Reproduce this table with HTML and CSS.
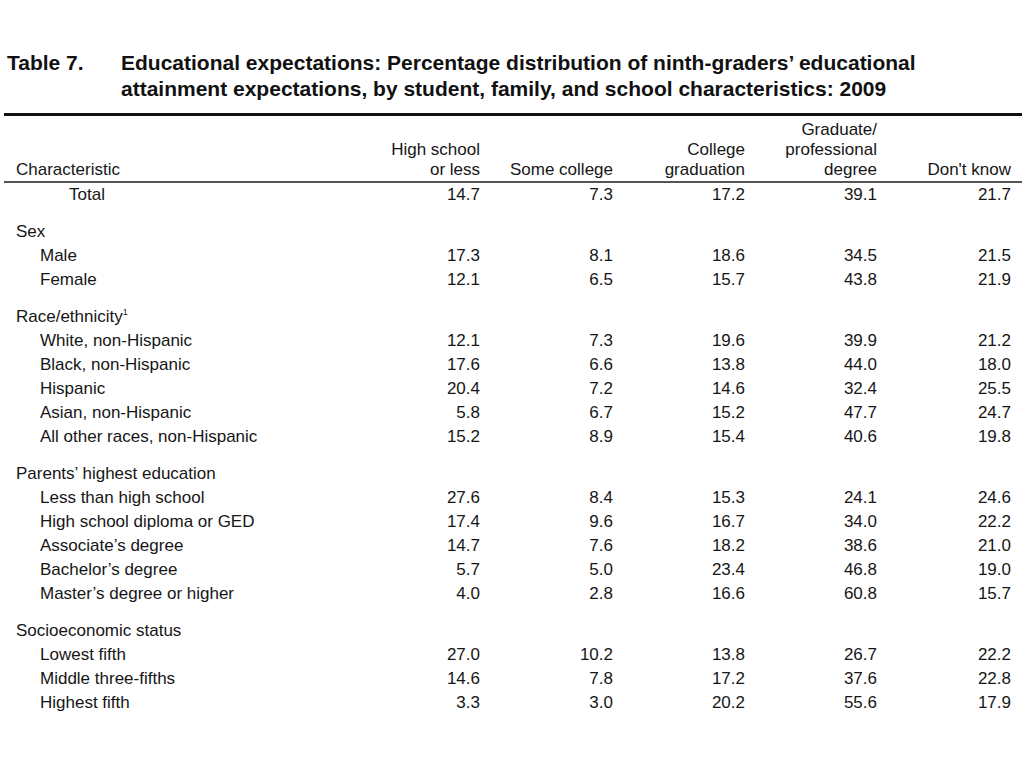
FILE: index.html
```html
<!DOCTYPE html>
<html>
<head>
<meta charset="utf-8">
<link rel="stylesheet" href="styles.css">
</head>
<body>
<div class="page">
  <div class="title">
    <div class="tnum">Table 7.</div>
    <div class="ttext">Educational expectations: Percentage distribution of ninth-graders’ educational attainment expectations, by student, family, and school characteristics: 2009</div>
  </div>
  <table class="data">
    <colgroup>
      <col class="c-label"><col class="c-hs"><col class="c-sc"><col class="c-cg"><col class="c-gd"><col class="c-dk">
    </colgroup>
    <thead>
      <tr>
        <th class="lab">Characteristic</th>
        <th>High school<br>or less</th>
        <th>Some college</th>
        <th>College<br>graduation</th>
        <th>Graduate/<br>professional<br>degree</th>
        <th class="last">Don't know</th>
      </tr>
    </thead>
    <tbody>
      <tr class="total"><td class="lab">Total</td><td>14.7</td><td>7.3</td><td>17.2</td><td>39.1</td><td class="last">21.7</td></tr>

      <tr class="group"><td class="lab">Sex</td><td></td><td></td><td></td><td></td><td class="last"></td></tr>
      <tr class="item"><td class="lab">Male</td><td>17.3</td><td>8.1</td><td>18.6</td><td>34.5</td><td class="last">21.5</td></tr>
      <tr class="item"><td class="lab">Female</td><td>12.1</td><td>6.5</td><td>15.7</td><td>43.8</td><td class="last">21.9</td></tr>

      <tr class="group"><td class="lab">Race/ethnicity<sup>1</sup></td><td></td><td></td><td></td><td></td><td class="last"></td></tr>
      <tr class="item"><td class="lab">White, non-Hispanic</td><td>12.1</td><td>7.3</td><td>19.6</td><td>39.9</td><td class="last">21.2</td></tr>
      <tr class="item"><td class="lab">Black, non-Hispanic</td><td>17.6</td><td>6.6</td><td>13.8</td><td>44.0</td><td class="last">18.0</td></tr>
      <tr class="item"><td class="lab">Hispanic</td><td>20.4</td><td>7.2</td><td>14.6</td><td>32.4</td><td class="last">25.5</td></tr>
      <tr class="item"><td class="lab">Asian, non-Hispanic</td><td>5.8</td><td>6.7</td><td>15.2</td><td>47.7</td><td class="last">24.7</td></tr>
      <tr class="item"><td class="lab">All other races, non-Hispanic</td><td>15.2</td><td>8.9</td><td>15.4</td><td>40.6</td><td class="last">19.8</td></tr>

      <tr class="group"><td class="lab">Parents’ highest education</td><td></td><td></td><td></td><td></td><td class="last"></td></tr>
      <tr class="item"><td class="lab">Less than high school</td><td>27.6</td><td>8.4</td><td>15.3</td><td>24.1</td><td class="last">24.6</td></tr>
      <tr class="item"><td class="lab">High school diploma or GED</td><td>17.4</td><td>9.6</td><td>16.7</td><td>34.0</td><td class="last">22.2</td></tr>
      <tr class="item"><td class="lab">Associate’s degree</td><td>14.7</td><td>7.6</td><td>18.2</td><td>38.6</td><td class="last">21.0</td></tr>
      <tr class="item"><td class="lab">Bachelor’s degree</td><td>5.7</td><td>5.0</td><td>23.4</td><td>46.8</td><td class="last">19.0</td></tr>
      <tr class="item"><td class="lab">Master’s degree or higher</td><td>4.0</td><td>2.8</td><td>16.6</td><td>60.8</td><td class="last">15.7</td></tr>

      <tr class="group"><td class="lab">Socioeconomic status</td><td></td><td></td><td></td><td></td><td class="last"></td></tr>
      <tr class="item"><td class="lab">Lowest fifth</td><td>27.0</td><td>10.2</td><td>13.8</td><td>26.7</td><td class="last">22.2</td></tr>
      <tr class="item"><td class="lab">Middle three-fifths</td><td>14.6</td><td>7.8</td><td>17.2</td><td>37.6</td><td class="last">22.8</td></tr>
      <tr class="item"><td class="lab">Highest fifth</td><td>3.3</td><td>3.0</td><td>20.2</td><td>55.6</td><td class="last">17.9</td></tr>
    </tbody>
  </table>
</div>
</body>
</html>
```
FILE: styles.css
```css
html, body {
  margin: 0;
  padding: 0;
  background: #ffffff;
}
body {
  font-family: "Liberation Sans", Arial, Helvetica, sans-serif;
  color: #161616;
}
.page {
  width: 1024px;
  height: 768px;
  padding-top: 50px;
  box-sizing: border-box;
}
.title {
  display: flex;
  padding-left: 7px;
  font-weight: bold;
  font-size: 21px;
  line-height: 26px;
  color: #111;
}
.tnum {
  width: 114px;
  flex: none;
}
.ttext {
  width: 860px;
}
.data {
  margin-top: 11px;
  margin-left: 4px;
  width: 1018px;
  border-collapse: collapse;
  table-layout: fixed;
  font-size: 17px;
  border-top: 3px solid #111;
}
.c-label { width: 366px; }
.c-hs { width: 110px; }
.c-sc { width: 133px; }
.c-cg { width: 132px; }
.c-gd { width: 132px; }
.c-dk { width: 145px; }
.data th {
  font-weight: normal;
  text-align: right;
  vertical-align: bottom;
  line-height: 20px;
  padding: 4px 0 1px 0;
  white-space: nowrap;
  border-bottom: 2px solid #555;
}
.data th.lab {
  text-align: left;
  padding-left: 12px;
}
.data td {
  text-align: right;
  padding: 0;
  height: 24px;
  line-height: 24px;
  white-space: nowrap;
  vertical-align: middle;
}
.data th.last, .data td.last {
  padding-right: 11px;
}
.data td.lab {
  text-align: left;
}
.total td.lab {
  padding-left: 65px;
}
.group td {
  padding-top: 13px;
}
.group td.lab {
  padding-left: 12px;
}
.item td.lab {
  padding-left: 36px;
}
sup {
  font-size: 9px;
  line-height: 0;
  vertical-align: 7px;
}
```
